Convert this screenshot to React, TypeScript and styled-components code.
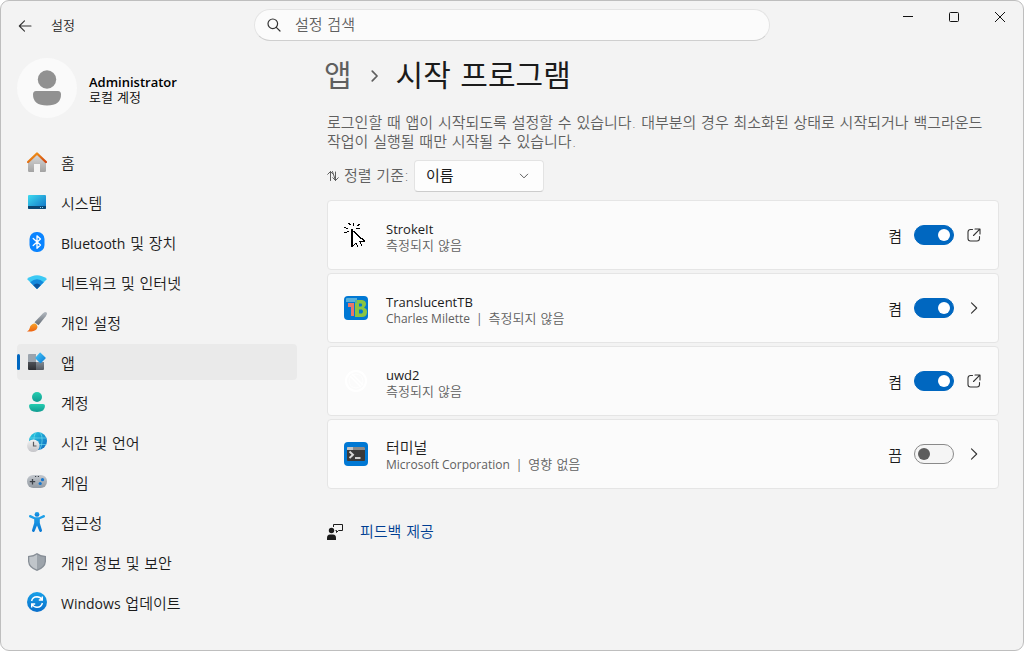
import React, { ReactNode, useId, useState } from "react";
import styled, { createGlobalStyle } from "styled-components";

const HANGUL = `"DejaVu Sans", "Noto Sans CJK KR", sans-serif`;
const LATIN = `"Open Sans", "Noto Sans CJK KR", sans-serif`;

const GlobalStyle = createGlobalStyle`
  *, *::before, *::after { box-sizing: border-box; }
  body { margin: 0; background: #fff; color: #1b1b1b; font-family: ${HANGUL}; font-size: 15px; font-weight: 350; line-height: 20px; }
  button, input, select { font: inherit; color: inherit; }
  h1, h2, p, ul { margin: 0; padding: 0; font-weight: inherit; }
  ul { list-style: none; }
  a { text-decoration: none; color: inherit; }
  svg { display: block; flex: none; }
`;

const Window = styled.div`
  min-height: 100vh;
  display: flex;
  flex-direction: column;
  background: #f3f3f3;
  border: 1px solid #bebebe;
  border-radius: 9px;
`;

const TitleBar = styled.header`
  display: grid;
  grid-template-columns: 1fr minmax(200px, 516px) 1fr;
  height: 49px;
`;

const TitleLeft = styled.div`
  display: flex;
  align-items: center;
  gap: 18px;
  padding-left: 16px;
`;

const WindowTitle = styled.span`
  font-size: 13px;
`;

const IconButton = styled.button`
  display: flex;
  align-items: center;
  justify-content: center;
  width: 16px;
  height: 16px;
  padding: 0;
  border: 0;
  background: none;
  flex: none;
`;

const SearchBox = styled.label`
  display: flex;
  align-items: center;
  gap: 14px;
  height: 32px;
  margin-top: 8px;
  padding: 0 12px;
  border: 1px solid #e4e4e4;
  border-bottom-color: #cfcfcf;
  border-radius: 16px;
  background: #fbfbfb;
`;

const SearchInput = styled.input`
  flex: 1;
  min-width: 0;
  padding: 0;
  border: 0;
  outline: 0;
  background: none;
  &::placeholder { color: #5f5f5f; opacity: 1; }
`;

const Captions = styled.div`
  display: flex;
  justify-content: flex-end;
`;

const CaptionButton = styled.button`
  display: flex;
  align-items: center;
  justify-content: center;
  width: 46px;
  height: 32px;
  padding: 0;
  border: 0;
  background: none;
`;

const Body = styled.div`
  flex: 1;
  display: grid;
  grid-template-columns: 280px minmax(0, 1fr);
  gap: 30px;
  padding: 0 24px 24px 16px;
`;

const Account = styled.div`
  display: flex;
  align-items: center;
  gap: 12px;
  margin: 8px 0 26px;
`;

const Avatar = styled.div`
  display: flex;
  align-items: center;
  justify-content: center;
  width: 60px;
  height: 60px;
  border-radius: 50%;
  background: #fafafa;
`;

const AccountText = styled.div`
  display: flex;
  flex-direction: column;
  padding-top: 4px;
  color: #000;
  font-size: 13px;
  line-height: 16px;
`;

const AccountName = styled.strong`
  font-family: ${LATIN};
  font-weight: 600;
`;

const NavList = styled.ul`
  display: flex;
  flex-direction: column;
  gap: 4px;
`;

const NavLink = styled.a<{ $active?: boolean }>`
  display: flex;
  align-items: center;
  gap: 14px;
  height: 36px;
  padding-left: 10px;
  border-radius: 4px;
  background: ${(p) => (p.$active ? "#eaeaea" : "none")};
  position: relative;
  &::before {
    content: "";
    display: ${(p) => (p.$active ? "block" : "none")};
    position: absolute;
    left: 0;
    top: 10px;
    width: 3px;
    height: 16px;
    border-radius: 2px;
    background: #0067c0;
  }
`;

const NavLabel = styled.span`
  padding-top: 4px;
`;

const Latin = styled.span`
  font-family: ${LATIN};
  font-size: 14px;
  font-weight: 400;
`;

const Heading = styled.h1`
  display: flex;
  align-items: center;
  gap: 15px;
  height: 50px;
  padding-top: 2px;
  font-size: 30px;
  font-weight: 400;
  line-height: 40px;
  margin-left: -3px;
`;

const Crumb = styled.a`
  color: #5f5f5f;
`;

const Description = styled.p`
  margin-top: 14px;
  color: #5f5f5f;
  line-height: 19px;
`;

const SortRow = styled.div`
  display: flex;
  align-items: center;
  gap: 5px;
  margin: 8px 0;
  color: #5f5f5f;
`;

const SelectWrap = styled.div`
  display: grid;
  align-items: center;
  width: 130px;
  & > * { grid-area: 1 / 1; }
  & > svg { justify-self: end; margin-right: 15px; pointer-events: none; }
`;

const Select = styled.select`
  appearance: none;
  height: 32px;
  padding: 0 30px 0 11px;
  border: 1px solid #e3e3e3;
  border-bottom-color: #cccccc;
  border-radius: 4px;
  background: #fdfdfd;
  color: #1b1b1b;
  font-weight: 400;
`;

const Cards = styled.ul`
  display: flex;
  flex-direction: column;
  gap: 3px;
`;

const Card = styled.li`
  display: flex;
  align-items: center;
  height: 70px;
  padding: 0 16px;
  border: 1px solid #e5e5e5;
  border-radius: 4px;
  background: #fbfbfb;
`;

const CardText = styled.div`
  flex: 1;
  min-width: 0;
  margin-left: 18px;
  padding-top: 4px;
`;

const AppName = styled.label<{ $latin?: boolean }>`
  display: block;
  font-family: ${(p) => (p.$latin ? LATIN : HANGUL)};
  font-size: ${(p) => (p.$latin ? "13px" : "15px")};
  font-weight: ${(p) => (p.$latin ? 400 : 350)};
  line-height: 17px;
`;

const Detail = styled.p`
  display: flex;
  gap: 6px;
  color: #5f5f5f;
  font-size: 13px;
  line-height: 16px;
`;

const Publisher = styled.span`
  font-family: ${LATIN};
  font-size: 12px;
  font-weight: 400;
`;

const State = styled.span`
  margin-right: 12px;
  padding-top: 3px;
`;

const Toggle = styled.input`
  appearance: none;
  display: flex;
  align-items: center;
  width: 40px;
  height: 20px;
  margin: 0 12px 0 0;
  padding: 0 3px;
  border: 1px solid #8a8a8a;
  border-radius: 10px;
  background: #f5f5f5;
  &::before {
    content: "";
    width: 12px;
    height: 12px;
    border-radius: 50%;
    background: #5d5d5d;
  }
  &:checked {
    justify-content: flex-end;
    border-color: #0067c0;
    background: #0067c0;
  }
  &:checked::before { background: #fff; }
`;

const Feedback = styled.a`
  display: flex;
  align-items: center;
  gap: 17px;
  width: max-content;
  margin-top: 33px;
  color: #003e92;
`;

function Chevron({ d, size = 16, width = 1.1, color = "#333" }: { d: string; size?: number; width?: number; color?: string }) {
  return (
    <svg width={size} height={size} viewBox="0 0 16 16" fill="none" stroke={color} strokeWidth={width} strokeLinecap="round" strokeLinejoin="round">
      <path d={d} />
    </svg>
  );
}

const OPEN_PATH = "M6.500 2.500H4.500a2.500 2.500 0 0 0-2.500 2.500v6.500a2.500 2.500 0 0 0 2.500 2.500H11a2.500 2.500 0 0 0 2.500-2.500V9.500M9 2H14V7M13.800 2.200L7.500 8.500";
const RIGHT_PATH = "M5.500 2.800L10.700 8L5.500 13.200";

function NavSvg({ children }: { children: ReactNode }) {
  return <svg width="20" height="20" viewBox="0 0 20 20">{children}</svg>;
}

const Gradient = ({ id, from, to, x2 = 0 }: { id: string; from: string; to: string; x2?: number }) => (
  <linearGradient id={id} x1="0" y1="0" x2={x2} y2="1">
    <stop offset="0" stopColor={from} />
    <stop offset="1" stopColor={to} />
  </linearGradient>
);

const HomeIcon = () => (
  <NavSvg>
    <defs>
      <Gradient id="wall" from="#d9d9d9" to="#a3a3a3" />
      <Gradient id="roof" from="#f7a11a" to="#cf4310" x2={1} />
    </defs>
    <path d="M10 2.500L19 10.500V18.800q0 1.200-1.200 1.200H13V12H7V20H2.200Q1 20 1 18.800V10.500Z" fill="url(#wall)" />
    <path d="M1.100 10L10 1.500L18.900 10" fill="none" stroke="url(#roof)" strokeWidth="2.400" strokeLinecap="round" strokeLinejoin="round" />
  </NavSvg>
);

const SystemIcon = () => (
  <NavSvg>
    <defs><Gradient id="screen" from="#3ddbf0" to="#0f6fc4" x2={1} /></defs>
    <rect x="1" y="3" width="18" height="14" rx="1" fill="url(#screen)" />
    <path d="M1 14H19V16q0 1-1 1H2q-1 0-1-1Z" fill="#0b4672" />
    <path d="M13 15h1v1h-1zM15 15h1v1h-1z" fill="#8fd4f4" />
  </NavSvg>
);

const BluetoothIcon = () => (
  <NavSvg>
    <rect x="2.500" y="0" width="15" height="20" rx="7" fill="#0a84ff" />
    <path d="M6.200 6.500L13.500 13L10 16.200V3.800L13.500 7L6.200 13.500" fill="none" stroke="#fff" strokeWidth="1.300" strokeLinejoin="round" strokeLinecap="round" />
  </NavSvg>
);

const WifiIcon = () => (
  <NavSvg>
    <path d="M0 7Q10-.5 20 7L10 17Z" fill="#3bc9f4" />
    <path d="M3.200 10.200Q10 4.500 16.800 10.200L10 17Z" fill="#1489dc" />
    <path d="M6.300 13.300Q10 9.700 13.700 13.300L10 17Z" fill="#0c559f" />
  </NavSvg>
);

const BrushIcon = () => (
  <NavSvg>
    <defs>
      <Gradient id="handle" from="#b4bac1" to="#636b74" />
      <Gradient id="bristle" from="#f6a22a" to="#ee6210" />
    </defs>
    <path d="M19.600.400Q20.600 1.500 18.800 4.200L11.500 13.200L7.500 10.200L15.800 1.500Q18.400-.700 19.600.400Z" fill="url(#handle)" />
    <path d="M5 12.600Q7.700 10.600 9.700 12.700Q11.500 15 9.600 17.300Q7 20 0 19.500Q2.500 18.300 2.700 16Q2.900 14 5 12.600Z" fill="url(#bristle)" />
  </NavSvg>
);

const AppsIcon = () => (
  <NavSvg>
    <defs>
      <Gradient id="tile" from="#4e5157" to="#2c2e33" />
      <Gradient id="tileRight" from="#828a93" to="#555b63" />
      <Gradient id="diamond" from="#49c9f7" to="#0a7ad6" x2={1} />
    </defs>
    <path d="M2 2H9V10H1V3Q1 2 2 2Z" fill="#9ba4ad" />
    <path d="M1 10H9V18H2Q1 18 1 17Z" fill="url(#tile)" />
    <path d="M9 10H17V17Q17 18 16 18H9Z" fill="url(#tileRight)" />
    <path d="M13.300.500L18.500 5.400Q19 6 18.500 6.600L14.300 10.800Q13.500 11.500 12.700 10.800L8.700 6.800Q8 6 8.700 5.200L12.700.700Q13 .200 13.300.500Z" fill="url(#diamond)" />
  </NavSvg>
);

const PersonIcon = () => (
  <NavSvg>
    <defs><Gradient id="person" from="#25cdb0" to="#109b91" /></defs>
    <circle cx="10" cy="5" r="5" fill="url(#person)" />
    <path d="M4 12H16Q18 12 18 13.800Q18 20 10 20T2 13.800Q2 12 4 12Z" fill="url(#person)" />
  </NavSvg>
);

const TimeIcon = () => (
  <NavSvg>
    <defs>
      <Gradient id="globe" from="#29d0e0" to="#1068c2" x2={1} />
      <Gradient id="clock" from="#f3f3f3" to="#c4c4c8" />
    </defs>
    <circle cx="11" cy="9" r="9" fill="url(#globe)" />
    <path d="M3 6H19M3 12.500H19.500M8.500.500Q5 8 9 17M13.500.500Q17 8 13 17.500" stroke="#78e4f2" strokeWidth=".6" fill="none" />
    <circle cx="6.300" cy="13.700" r="6.300" fill="url(#clock)" />
    <path d="M6.500 9.700V14H9.500" fill="none" stroke="#5b5b60" strokeWidth="1.200" />
  </NavSvg>
);

const GameIcon = () => (
  <NavSvg>
    <defs><Gradient id="pad" from="#c3c8ce" to="#939aa2" /></defs>
    <rect x="0" y="3" width="20" height="13" rx="6.200" fill="url(#pad)" />
    <path d="M5.500 7V12.400M2.800 9.700H8.200" stroke="#3c4148" strokeWidth="1.300" />
    <path d="M8 4.500h1.200M10.800 4.500H12" stroke="#3c4148" />
    <circle cx="15.500" cy="7.700" r="1.600" fill="#1577cf" />
    <circle cx="13.200" cy="11.500" r="1.600" fill="#1577cf" />
  </NavSvg>
);

const AccessIcon = () => (
  <NavSvg>
    <defs><Gradient id="access" from="#22a4ea" to="#0978d4" /></defs>
    <g fill="url(#access)">
      <circle cx="10" cy="2.400" r="2.400" />
      <path d="M3.600 3.100Q2.300 2.700 2 3.900T2.900 5.500L7.200 7.200V11L5 18.200Q4.800 19.500 6 19.900T7.700 19.100L10 13.500L12.300 19.100Q12.800 20.300 14 19.900T15 18.200L12.800 11V7.200L17.100 5.500Q18.300 5 18 3.900T16.400 3.100L12 5.300H8Z" />
    </g>
  </NavSvg>
);

const ShieldIcon = () => (
  <NavSvg>
    <path d="M10 1Q14 4 19 4V9.500Q18.500 16 10 19Q1.500 16 1 9.500V4Q6 4 10 1Z" fill="#878e96" />
    <path d="M10 2.500V17.500Q2.700 14.800 2.300 9.500V5.100Q6.500 5 10 2.500Z" fill="#c0c5ca" />
    <path d="M10 2.500V17.500Q17.300 14.800 17.700 9.500V5.100Q13.500 5 10 2.500Z" fill="#9da4ab" />
  </NavSvg>
);

const UpdateIcon = () => (
  <NavSvg>
    <defs><Gradient id="update" from="#17a0e8" to="#0a6fcb" /></defs>
    <circle cx="10" cy="10" r="10" fill="url(#update)" />
    <path d="M4.600 9Q5.500 4.900 10 4.800Q13.300 4.900 15 7.700M15.300 4.500V8H11.800M15.400 11Q14.500 15.100 10 15.200Q6.700 15.100 5 12.300M4.700 15.500V12H8.200" fill="none" stroke="#fff" strokeWidth="1.400" />
  </NavSvg>
);

const NAV: { icon: ReactNode; latin?: string; text: string; active?: boolean }[] = [
  { icon: <HomeIcon />, text: "홈" },
  { icon: <SystemIcon />, text: "시스템" },
  { icon: <BluetoothIcon />, latin: "Bluetooth", text: " 및 장치" },
  { icon: <WifiIcon />, text: "네트워크 및 인터넷" },
  { icon: <BrushIcon />, text: "개인 설정" },
  { icon: <AppsIcon />, text: "앱", active: true },
  { icon: <PersonIcon />, text: "계정" },
  { icon: <TimeIcon />, text: "시간 및 언어" },
  { icon: <GameIcon />, text: "게임" },
  { icon: <AccessIcon />, text: "접근성" },
  { icon: <ShieldIcon />, text: "개인 정보 및 보안" },
  { icon: <UpdateIcon />, latin: "Windows", text: " 업데이트" },
];

const CursorIcon = () => (
  <svg width="24" height="24" viewBox="0 0 24 24">
    <path d="M8 8V22.500L11.500 19L13.500 23.500L16.500 23.500L15 18H20L8 8Z" fill="#fff" />
    <g shapeRendering="crispEdges">
      <path d="M7 6h2v18H7zM9 8h2v1H9zM10 9h2v1h-2zM11 10h2v1h-2zM12 11h2v1h-2zM13 12h2v1h-2zM14 13h2v1h-2zM15 14h2v1h-2zM16 15h3v1h-3zM18 16h2v1h-2zM19 17h2v1h-2zM15 18h6v1h-6zM9 22h1v1H9zM10 21h1v1h-1zM11 20h1v1h-1zM12 20h1v2h-1zM13 22h1v2h-1zM16 19h1v2h-1zM17 21h1v2h-1z" />
      <path d="M4 0h2v1H4zM5 1h2v1H5zM9 0h1v3H9zM14 1h2v1h-2zM13 2h2v1h-2zM0 4h2v1H0zM2 5h2v1H2zM12 5h4v1h-4zM3 8h2v1H3zM0 9h3v1H0z" />
    </g>
  </svg>
);

const TranslucentIcon = () => (
  <svg width="24" height="24" viewBox="0 0 24 24">
    <rect width="24" height="24" rx="4" fill="#0078d4" />
    <path d="M3 2H13V6H2V3Q2 2 3 2Z" fill="#5ab0d8" />
    <path d="M4 7H10V20H7V11H4Z" fill="#e8776a" />
    <path d="M11 4H18Q22 4.500 22 8Q22 10.500 20 11.500Q23.500 13 23 16.500Q22.500 21 18 21H11ZM15 7.500V10.500H17.500Q19 9 17.500 7.500ZM15 13.500V17.500H18Q20 15.500 18 13.500Z" fill="#8bc541" fillRule="evenodd" />
    <path d="M11 4H13V7H11Z" fill="#55b0a0" />
  </svg>
);

const UwdIcon = () => (
  <svg width="24" height="24" viewBox="0 0 24 24" fill="none" stroke="#fff">
    <circle cx="12" cy="12" r="10" strokeWidth="2" />
    <circle cx="12" cy="12" r="7" />
    <path d="M6 7L17 18M8 5L19 16" strokeWidth="1.500" />
  </svg>
);

const TerminalIcon = () => (
  <svg width="24" height="24" viewBox="0 0 24 24">
    <rect width="24" height="24" rx="4" fill="#0078d4" />
    <rect x="3" y="5" width="18" height="14" rx="1" fill="#3a3a3a" />
    <path d="M3 8V6Q3 5 4 5H20Q21 5 21 6V8Z" fill="#8a8a8a" />
    <path d="M3 8V6Q3 5 4 5H9V8Z" fill="#c4c4c4" />
    <path d="M5.500 9.500L9 12.700L5.500 16" fill="none" stroke="#d8d8d8" strokeWidth="1.900" />
    <path d="M11 16H16.500" stroke="#fff" strokeWidth="1.500" />
  </svg>
);

interface AppInfo {
  icon: ReactNode;
  name: string;
  latin?: boolean;
  publisher?: string;
  impact: string;
  on: boolean;
  external?: boolean;
}

const APPS: AppInfo[] = [
  { icon: <CursorIcon />, name: "StrokeIt", latin: true, impact: "측정되지 않음", on: true, external: true },
  { icon: <TranslucentIcon />, name: "TranslucentTB", latin: true, publisher: "Charles Milette", impact: "측정되지 않음", on: true },
  { icon: <UwdIcon />, name: "uwd2", latin: true, impact: "측정되지 않음", on: true, external: true },
  { icon: <TerminalIcon />, name: "터미널", publisher: "Microsoft Corporation", impact: "영향 없음", on: false },
];

function AppCard({ app }: { app: AppInfo }) {
  const id = useId();
  const [on, setOn] = useState(app.on);
  return (
    <Card>
      {app.icon}
      <CardText>
        <AppName htmlFor={id} $latin={app.latin}>{app.name}</AppName>
        <Detail>
          {app.publisher && (
            <>
              <Publisher>{app.publisher}</Publisher>
              <Publisher>|</Publisher>
            </>
          )}
          <span>{app.impact}</span>
        </Detail>
      </CardText>
      <State>{on ? "켬" : "끔"}</State>
      <Toggle id={id} type="checkbox" role="switch" checked={on} onChange={(e) => setOn(e.target.checked)} />
      <IconButton aria-label={`${app.name} 열기`}>
        <Chevron d={app.external ? OPEN_PATH : RIGHT_PATH} />
      </IconButton>
    </Card>
  );
}

export default function App() {
  return (
    <>
      <GlobalStyle />
      <Window>
        <TitleBar>
          <TitleLeft>
            <IconButton aria-label="뒤로">
              <Chevron d="M14 8H2.500M7.500 2.800L2.300 8L7.500 13.200" />
            </IconButton>
            <WindowTitle>설정</WindowTitle>
          </TitleLeft>
          <SearchBox>
            <svg width="14" height="14" viewBox="0 0 14 14" fill="none" stroke="#333" strokeWidth="1.200" strokeLinecap="round">
              <circle cx="5.800" cy="5.800" r="4.800" />
              <path d="M9.300 9.300L13 13" />
            </svg>
            <SearchInput aria-label="설정 검색" placeholder="설정 검색" />
          </SearchBox>
          <Captions>
            <CaptionButton aria-label="최소화">
              <svg width="10" height="10" viewBox="0 0 10 10" stroke="#111"><path d="M0 4.500H10" /></svg>
            </CaptionButton>
            <CaptionButton aria-label="최대화">
              <svg width="10" height="10" viewBox="0 0 10 10" fill="none" stroke="#111"><rect x=".5" y=".5" width="9" height="9" rx="1" /></svg>
            </CaptionButton>
            <CaptionButton aria-label="닫기">
              <svg width="10" height="10" viewBox="0 0 10 10" stroke="#111"><path d="M0 0L10 10M10 0L0 10" /></svg>
            </CaptionButton>
          </Captions>
        </TitleBar>
        <Body>
          <aside>
            <Account>
              <Avatar>
                <svg width="30" height="36" viewBox="0 0 30 36" fill="#919191">
                  <circle cx="15" cy="9.500" r="9.200" />
                  <path d="M4 21H26Q29 21 29 24.500Q29 35.500 15 35.500T1 24.500Q1 21 4 21Z" />
                </svg>
              </Avatar>
              <AccountText>
                <AccountName>Administrator</AccountName>
                <span>로컬 계정</span>
              </AccountText>
            </Account>
            <nav>
              <NavList>
                {NAV.map((item) => (
                  <li key={item.text}>
                    <NavLink href="#" $active={item.active}>
                      {item.icon}
                      <NavLabel>
                        {item.latin && <Latin>{item.latin}</Latin>}
                        {item.text}
                      </NavLabel>
                    </NavLink>
                  </li>
                ))}
              </NavList>
            </nav>
          </aside>
          <main>
            <Heading>
              <Crumb href="#">앱</Crumb>
              <Chevron d="M6 2.500L11.500 8L6 13.500" size={14} width={2} color="#5f5f5f" />
              <span>시작 프로그램</span>
            </Heading>
            <Description>
              로그인할 때 앱이 시작되도록 설정할 수 있습니다. 대부분의 경우 최소화된 상태로 시작되거나 백그라운드 작업이 실행될 때만 시작될 수 있습니다.
            </Description>
            <SortRow>
              <svg width="12" height="12" viewBox="0 0 12 12" fill="none" stroke="#5f5f5f" strokeLinecap="round" strokeLinejoin="round">
                <path d="M3.500 10.500V1.500M.700 4.300L3.500 1.500L6.200 4.300M5.500 1.500L8.500 10.500M8.500 2V10.500M5.800 7.700L8.500 10.500L11.300 7.700" />
              </svg>
              <label htmlFor="sort">정렬 기준:</label>
              <SelectWrap>
                <Select id="sort" defaultValue="name">
                  <option value="name">이름</option>
                </Select>
                <Chevron d="M2 5L8 11L14 5" size={10} width={1.6} color="#5f5f5f" />
              </SelectWrap>
            </SortRow>
            <Cards>
              {APPS.map((app) => (
                <AppCard key={app.name} app={app} />
              ))}
            </Cards>
            <Feedback href="#">
              <svg width="16" height="16" viewBox="0 0 16 16" fill="#1b1b1b">
                <circle cx="4.500" cy="6.500" r="2.700" />
                <path d="M0 16V14Q0 10.500 3 10.500H6Q9 10.500 9 14V16Z" />
                <path d="M6.500 3V.500H15.500V6.500H11.500L9.500 8.500V6.500H8.500" fill="none" stroke="#1b1b1b" />
              </svg>
              <span>피드백 제공</span>
            </Feedback>
          </main>
        </Body>
      </Window>
    </>
  );
}
